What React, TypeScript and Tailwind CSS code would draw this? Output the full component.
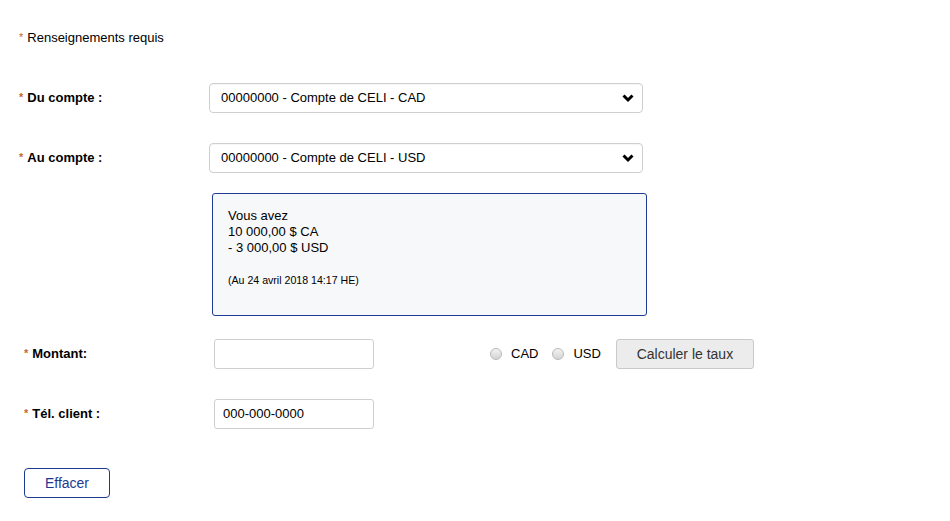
function Star() {
  return <span className="text-[#c4682c] text-[11px] mr-[4px] relative -top-[1px]">*</span>;
}

function Chevron() {
  return (
    <svg width="12" height="9" viewBox="0 0 12 9" className="mt-[1px]">
      <polyline points="1.5,1.5 6,6 10.5,1.5" fill="none" stroke="#000" strokeWidth="3" />
    </svg>
  );
}

function Select({ value }: { value: string }) {
  return (
    <div className="w-[434px] h-[30px] border border-[#cfcfcf] rounded-[4px] bg-white flex items-center justify-between pl-[11px] pr-[8px] shadow-[inset_0_1px_1px_rgba(0,0,0,0.04)]">
      <span className="text-[13px] text-black">{value}</span>
      <Chevron />
    </div>
  );
}

function Radio({ label }: { label: string }) {
  return (
    <label className="flex items-center">
      <span className="w-[12px] h-[12px] rounded-full border border-[#b8b8b8] bg-gradient-to-b from-[#f3f3f3] to-[#d4d4d4]" />
      <span className="ml-[9px] text-[13px] text-black">{label}</span>
    </label>
  );
}

export default function App() {
  return (
    <div className="w-[950px] h-[521px] bg-white text-black font-['Liberation_Sans',Arial,sans-serif]">
      <div className="pl-[19px] pt-[30px] text-[13px] leading-[16px]">
        <Star />
        Renseignements requis
      </div>

      <div className="flex items-center h-[30px] mt-[37px] pl-[19px]">
        <div className="w-[190px] text-[13px] font-bold">
          <Star />
          Du compte :
        </div>
        <Select value="00000000 - Compte de CELI - CAD" />
      </div>

      <div className="flex items-center h-[30px] mt-[30px] pl-[19px]">
        <div className="w-[190px] text-[13px] font-bold">
          <Star />
          Au compte :
        </div>
        <Select value="00000000 - Compte de CELI - USD" />
      </div>

      <div className="ml-[212px] mt-[20px] w-[435px] h-[123px] border border-[#1d3c92] rounded-[3px] bg-[#f7f8fa] pl-[15px] pt-[14px]">
        <div className="text-[13px] leading-[16px]">
          <div>Vous avez</div>
          <div>10 000,00 $ CA</div>
          <div>- 3 000,00 $ USD</div>
        </div>
        <div className="text-[10.6px] leading-[14px] mt-[17px]">(Au 24 avril 2018 14:17 HE)</div>
      </div>

      <div className="flex items-center h-[30px] mt-[23px] pl-[24px]">
        <div className="w-[190px] text-[13px] font-bold">
          <Star />
          Montant:
        </div>
        <div className="w-[160px] h-[30px] border border-[#cfcfcf] rounded-[3px] bg-white" />
        <div className="flex items-center ml-[116px] gap-[14px]">
          <Radio label="CAD" />
          <Radio label="USD" />
          <button className="ml-[1px] w-[138px] h-[30px] bg-[#ececec] border border-[#c9c9c9] rounded-[3px] text-[14px] text-[#333]">
            Calculer le taux
          </button>
        </div>
      </div>

      <div className="flex items-center h-[30px] mt-[30px] pl-[24px]">
        <div className="w-[190px] text-[13px] font-bold">
          <Star />
          Tél. client :
        </div>
        <div className="w-[160px] h-[30px] border border-[#cfcfcf] rounded-[3px] bg-white flex items-center pl-[8px] text-[13px]">
          000-000-0000
        </div>
      </div>

      <button className="ml-[24px] mt-[39px] w-[86px] h-[30px] border border-[#1d3a8f] rounded-[4px] bg-white text-[14px] text-[#1d3a8f]">
        Effacer
      </button>
    </div>
  );
}
